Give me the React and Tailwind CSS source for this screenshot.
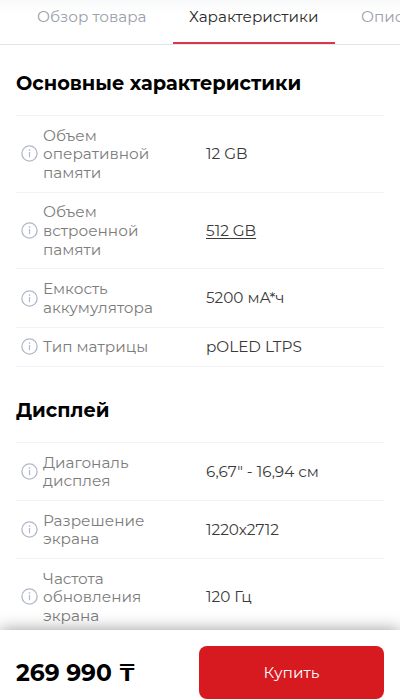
function InfoIcon() {
  return (
    <svg className="ml-[5px] h-[17px] w-[17px] shrink-0" viewBox="0 0 17 17" fill="none" stroke="#b3b8c8">
      <circle cx="8.5" cy="8.5" r="7.6" strokeWidth="1.3" />
      <path d="M8.5 7v5.2" strokeWidth="1.2" />
      <path d="M8.5 4.3v1.5" strokeWidth="1.4" />
    </svg>
  );
}

const mainSpecs = [
  { h: "h-[77px]", lines: ["Объем", "оперативной", "памяти"], value: "12 GB" },
  { h: "h-[76px]", lines: ["Объем", "встроенной", "памяти"], value: "512 GB", link: true },
  { h: "h-[59px]", lines: ["Емкость", "аккумулятора"], value: "5200 мА*ч" },
  { h: "h-[39px]", lines: ["Тип матрицы"], value: "pOLED LTPS" },
];

const displaySpecs = [
  { h: "h-[58px]", lines: ["Диагональ", "дисплея"], value: '6,67" - 16,94 см' },
  { h: "h-[58px]", lines: ["Разрешение", "экрана"], value: "1220x2712" },
  { h: "h-[77px]", lines: ["Частота", "обновления", "экрана"], value: "120 Гц" },
];

function SpecRow({ row }) {
  return (
    <div className={"flex items-center border-t border-[#f3f3f5] text-[15.27px] leading-[18.7px] " + row.h}>
      <div className="flex w-[190px] shrink-0 items-center gap-[5px] text-[#7c7c7c]">
        <InfoIcon />
        <div className="pt-[1.5px]">
          {row.lines.map((text) => (
            <div key={text} className="whitespace-nowrap">{text}</div>
          ))}
        </div>
      </div>
      <div className={"whitespace-nowrap pt-[1.5px] text-[#3a3a3a]" + (row.link ? " underline decoration-1 underline-offset-2" : "")}>
        {row.value}
      </div>
    </div>
  );
}

export default function App() {
  return (
    <div className="flex h-[700px] w-[400px] flex-col overflow-hidden bg-white font-['Montserrat',sans-serif]">
      <nav className="flex h-[45px] shrink-0 overflow-hidden whitespace-nowrap border-b border-[#e2e5e7] bg-linear-to-b from-[#f8f9fa] to-white to-30% text-[15.27px] leading-[34px] text-[#9ca0ac]">
        <div className="w-[173px] shrink-0 pl-[37px]">Обзор товара</div>
        <div className="h-[44px] w-[162px] shrink-0 border-b-2 border-[#d9384a] pl-4 text-[#2b2b2b]">Характеристики</div>
        <div className="shrink-0 pl-[26px]">Описание</div>
      </nav>

      <main className="min-h-0 flex-1 overflow-hidden px-4">
        <h2 className="h-[70px] whitespace-nowrap pt-[24px] text-[19.35px] font-bold leading-[28px] text-black">Основные характеристики</h2>
        {mainSpecs.map((row, i) => <SpecRow key={i} row={row} />)}
        <h2 className="h-[76px] border-t border-[#f3f3f5] pt-[29px] text-[19.35px] font-bold leading-[28px] text-black">Дисплей</h2>
        {displaySpecs.map((row, i) => <SpecRow key={i} row={row} />)}
      </main>

      <footer className="relative flex h-[70px] shrink-0 items-start bg-white px-4 pt-4 shadow-[0_0_16px_0_rgba(0,0,0,0.4)]">
        <div className="w-[183px] shrink-0 whitespace-nowrap text-[23.4px] font-bold leading-[54px] text-black">269 990 ₸</div>
        <button className="h-[53px] w-[185px] rounded-lg bg-[#d71920] text-[15.4px] text-white">Купить</button>
      </footer>
    </div>
  );
}
